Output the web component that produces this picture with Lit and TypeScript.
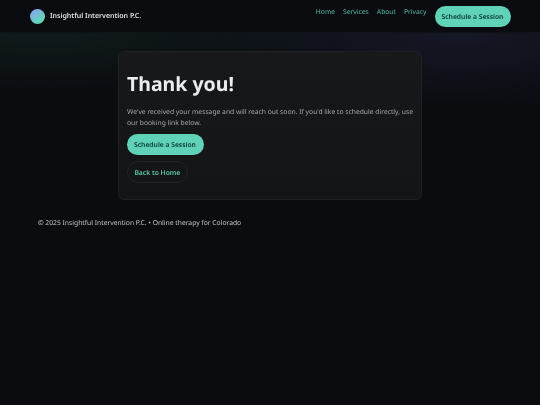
import { LitElement, html, css } from "lit";
import { customElement } from "lit/decorators.js";

@customElement("app-root")
export class AppRoot extends LitElement {
  static styles = css`
    :host {
      display: block;
      width: 540px;
      height: 405px;
      overflow: hidden;
      font-family: "Noto Sans", sans-serif;
      text-rendering: geometricPrecision;
      color: #e8ebee;
      background:
        radial-gradient(300px 60px at 8% 33px, rgba(94, 214, 180, 0.07), transparent 100%),
        radial-gradient(280px 75px at 85% 33px, rgba(120, 130, 230, 0.1), transparent 100%),
        #0a0c10;
      filter: blur(0.4px);
    }
    header {
      height: 33px;
      box-sizing: border-box;
      display: flex;
      justify-content: space-between;
      padding: 6px 29px 0 29.5px;
      background: #0a0c10;
      border-bottom: 1px solid #101419;
    }
    .brand {
      display: flex;
      align-items: center;
      gap: 5.5px;
      height: 21px;
      font-size: 7px;
      font-weight: 600;
      color: #dfe3e6;
    }
    .logo {
      width: 15px;
      height: 15px;
      border-radius: 50%;
      background: linear-gradient(145deg, #8f9ff8, #5fd6b8 75%);
    }
    nav {
      display: flex;
      gap: 8px;
      font-size: 6.75px;
      color: #58bda5;
    }
    nav a {
      line-height: 11px;
    }
    .btn {
      display: inline-block;
      box-sizing: border-box;
      height: 21px;
      line-height: 21px;
      padding: 0 7.6px 0 7px;
      border-radius: 11px;
      font-size: 6.75px;
      font-weight: 600;
      white-space: nowrap;
    }
    nav a.btn {
      line-height: 21px;
    }
    .primary {
      background: #5fd2b8;
      color: #0a3a30;
    }
    .ghost {
      border: 1px solid #1f2428;
      color: #5cc8ae;
      line-height: 21px;
      height: 22px;
      padding: 0 7px 0 6.4px;
    }
    main {
      width: 304px;
      box-sizing: border-box;
      margin: 18px auto 0;
      padding: 17px 7px 11px 8px;
      background: linear-gradient(#16181a, #131517);
      border: 1px solid #1d2024;
      border-radius: 6px;
      height: 149px;
    }
    h1 {
      margin: 0;
      font-size: 19.5px;
      font-weight: 700;
      line-height: 29px;
      color: #e9edf0;
    }
    p {
      margin: 8px 0 0;
      font-size: 6.75px;
      line-height: 11px;
      color: #a4a9ae;
    }
    .actions {
      display: flex;
      flex-direction: column;
      align-items: flex-start;
      gap: 6px;
      margin-top: 6px;
    }
    footer {
      margin: 17.5px 0 0 38px;
      font-size: 6.75px;
      color: #c3c7cb;
    }
  `;

  render() {
    return html`
      <header>
        <div class="brand"><span class="logo"></span>Insightful Intervention P.C.</div>
        <nav>
          <a>Home</a><a>Services</a><a>About</a><a>Privacy</a>
          <a class="btn primary">Schedule a Session</a>
        </nav>
      </header>
      <main>
        <h1>Thank you!</h1>
        <p>We've received your message and will reach out soon. If you'd like to schedule directly, use our booking link below.</p>
        <div class="actions">
          <a class="btn primary">Schedule a Session</a>
          <a class="btn ghost">Back to Home</a>
        </div>
      </main>
      <footer>© 2025 Insightful Intervention P.C. • Online therapy for Colorado</footer>
    `;
  }
}
